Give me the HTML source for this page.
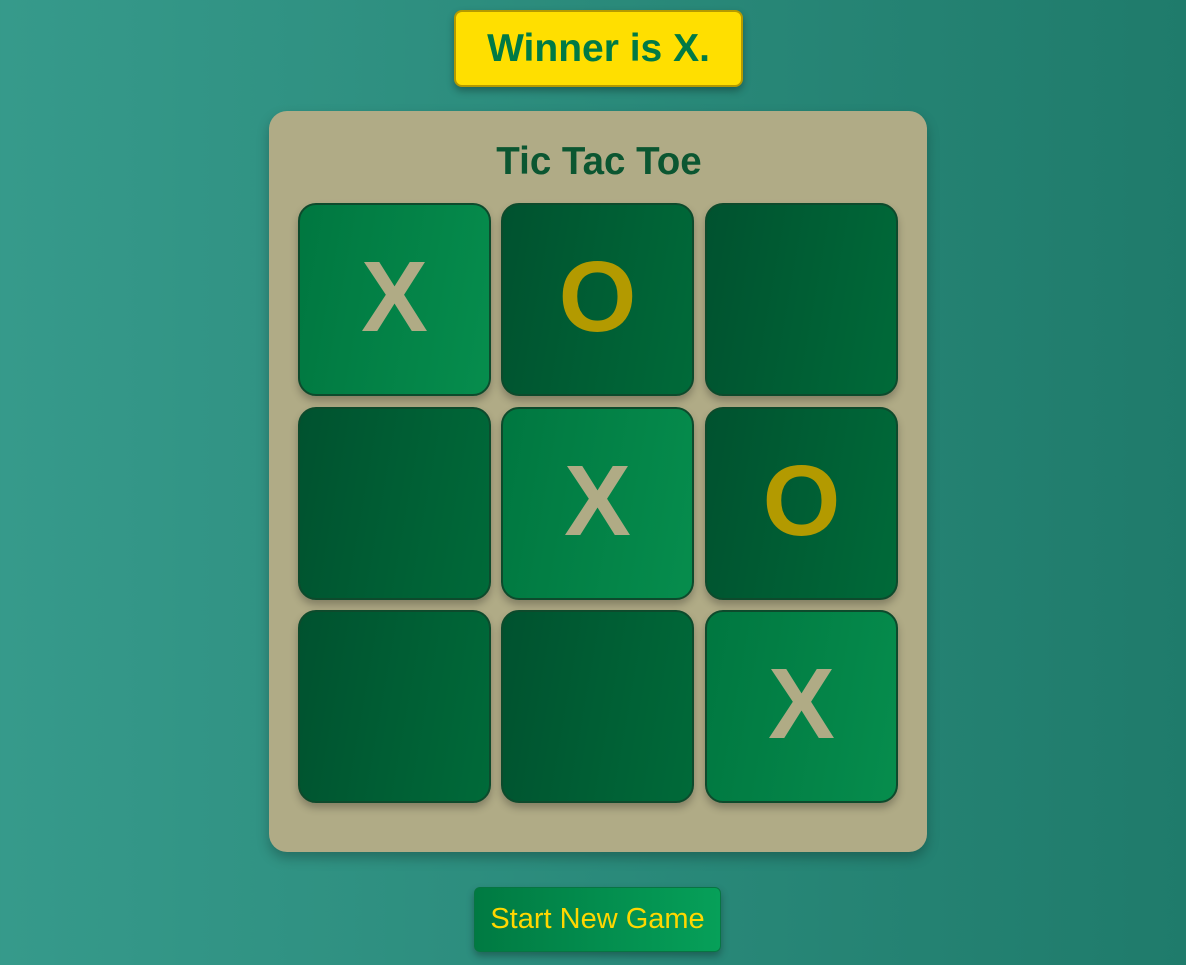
<!DOCTYPE html>
<html><head><style>
html,body{margin:0;padding:0;}
body{width:1186px;height:965px;overflow:hidden;background:linear-gradient(90deg,#369a8b,#1f7b6b);font-family:"Liberation Sans",sans-serif;position:relative;}
.banner{position:absolute;left:454px;top:10px;width:285px;height:73px;background:#ffdf00;border:2px solid #b59a00;border-radius:8px;box-shadow:0 4px 8px rgba(0,0,0,.3);color:#007a45;font-weight:bold;font-size:39px;text-align:center;line-height:73px;}
.board{position:absolute;left:269px;top:111px;width:658px;height:741px;background:#b0ab86;border-radius:18px;box-shadow:0 6px 12px rgba(0,0,0,.25);}
.title{position:absolute;left:6px;width:1186px;top:140px;text-align:center;font-size:38.5px;font-weight:bold;color:#0b5631;}
.cell{position:absolute;width:189px;height:189px;border:2px solid #0d4a2c;border-radius:18px;box-sizing:content-box;background:linear-gradient(100deg,#00522f,#006a39);box-shadow:0 5px 8px rgba(0,0,0,.25);font-weight:bold;font-size:100px;text-align:center;line-height:185px;}
.w{background:linear-gradient(100deg,#007740,#068d4d);}
.x{color:#b0ab85;}.o{color:#b39a00;}
.btn{position:absolute;left:474px;top:887px;width:245px;height:63px;border:1px solid #077542;border-radius:6px;background:linear-gradient(90deg,#007a42,#06a059);color:#ffd700;font-size:29px;text-align:center;line-height:63px;box-shadow:0 4px 8px rgba(0,0,0,.3);}
</style></head><body>
<div class="banner">Winner is X.</div>
<div class="board"></div>
<div class="title">Tic Tac Toe</div>
<div class="cell w x" style="left:298px;top:203px">X</div>
<div class="cell o" style="left:501px;top:203px">O</div>
<div class="cell" style="left:705px;top:203px"></div>
<div class="cell" style="left:298px;top:407px"></div>
<div class="cell w x" style="left:501px;top:407px">X</div>
<div class="cell o" style="left:705px;top:407px">O</div>
<div class="cell" style="left:298px;top:610px"></div>
<div class="cell" style="left:501px;top:610px"></div>
<div class="cell w x" style="left:705px;top:610px">X</div>
<div class="btn">Start New Game</div>
</body></html>
